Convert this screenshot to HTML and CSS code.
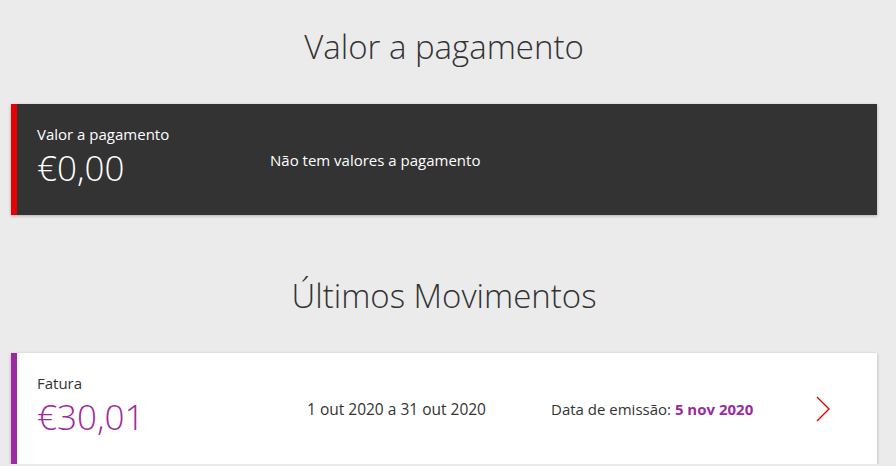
FILE: index.html
```html
<!DOCTYPE html>
<html lang="pt">
<head>
  <meta charset="UTF-8" />
  <title>Valor a pagamento</title>
  <link rel="stylesheet" href="styles.css">
</head>
<body>
  <div class="page">
    <h1 class="titulo">Valor a pagamento</h1>
    <div class="cartao escuro">
      <div class="col-valor">
        <div class="rotulo">Valor a pagamento</div>
        <div class="montante">€0,00</div>
      </div>
      <div class="info">Não tem valores a pagamento</div>
    </div>

    <h1 class="titulo movimentos">Últimos Movimentos</h1>
    <div class="cartao claro">
      <div class="col-valor">
        <div class="rotulo">Fatura</div>
        <div class="montante roxo">€30,01</div>
      </div>
      <div class="periodo">1 out 2020 a 31 out 2020</div>
      <div class="emissao">Data de emissão: <strong>5 nov 2020</strong></div>
      <div class="seta">
        <svg width="16" height="26" viewBox="0 0 16 26"><path d="M2 1 L14 13 L2 25" fill="none" stroke="#e60000" stroke-width="1.4"/></svg>
      </div>
    </div>
  </div>
</body>
</html>
```

FILE: styles.css
```css
* { margin: 0; padding: 0; box-sizing: border-box; }
body {
  background: #ebebeb;
  color: #333;
  font-family: 'Open Sans', sans-serif;
  overflow: hidden;
}
.page {
  padding: 0 19px 0 11px;
}
.titulo {
  font-weight: 300;
  font-size: 33px;
  text-align: center;
  color: #333;
  padding-top: 24px;
  height: 104px;
}
.titulo.movimentos {
  padding-top: 58px;
  height: 138px;
}
.cartao {
  display: flex;
  align-items: center;
  height: 111px;
  padding-left: 20px;
  box-shadow: 0 1px 3px rgba(0, 0, 0, 0.25);
}
.escuro {
  background: #333;
  color: #fff;
  border-left: 6px solid #e60000;
}
.claro {
  background: #fff;
  color: #333;
  border-left: 6px solid #9c2aa0;
}
.col-valor {
  width: 233px;
  padding-bottom: 4px;
}
.rotulo {
  font-size: 15px;
  line-height: 20px;
}
.montante {
  font-weight: 300;
  font-size: 35px;
  line-height: 48px;
}
.montante.roxo {
  color: #9c2aa0;
}
.info {
  font-size: 15px;
}
.periodo {
  width: 281px;
  padding-left: 37px;
  font-size: 15.5px;
}
.emissao {
  width: 264px;
  font-size: 15px;
}
.emissao strong {
  color: #9c2aa0;
  font-weight: 700;
}
.seta {
  display: flex;
  align-items: center;
}
```
